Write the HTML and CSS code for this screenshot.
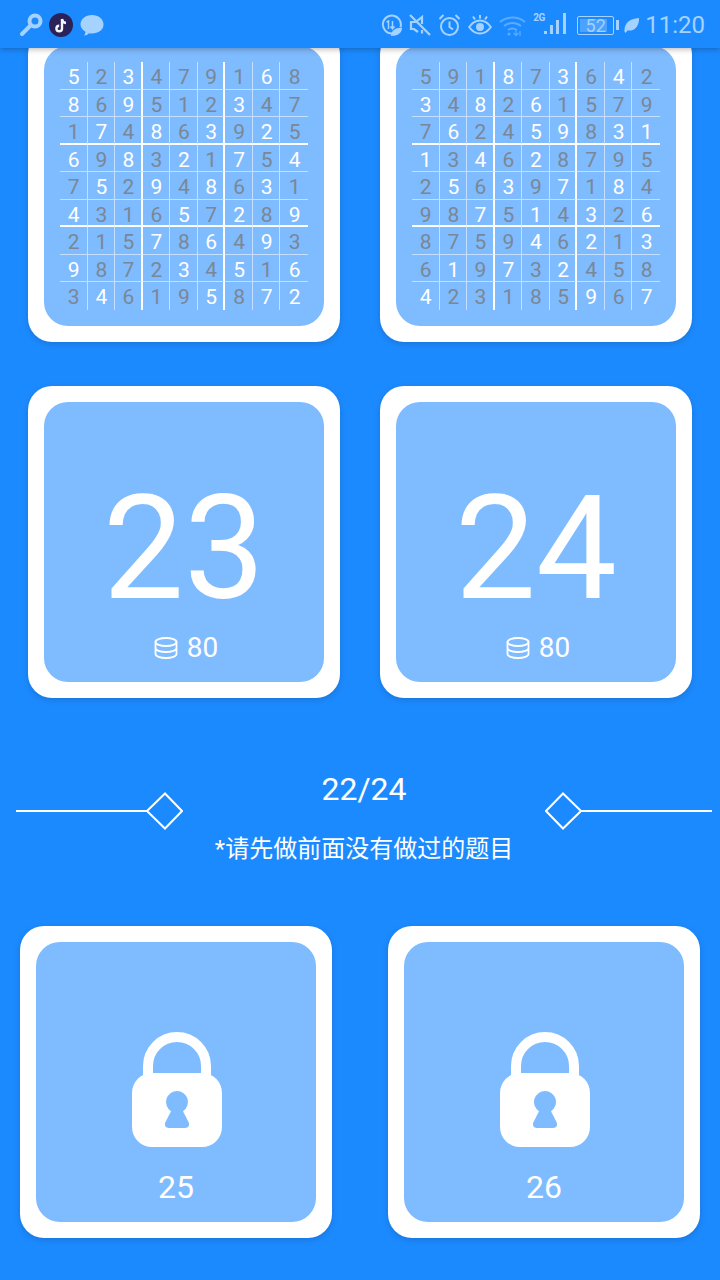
FILE: index.html
```html
<!DOCTYPE html>
<html lang="zh-CN">
<head>
  <meta charset="UTF-8" />
  <meta name="viewport" content="width=device-width, initial-scale=1.0" />
  <title>数独</title>
  <link rel="stylesheet" href="styles.css">
</head>
<body>
  <header class="status">
    <div class="status-left">
      <svg width="26" height="26" viewBox="0 0 26 26"><circle cx="17" cy="9" r="5.500" fill="none" stroke="currentColor" stroke-width="4"/><path d="M13 13 4 22" stroke="currentColor" stroke-width="4" stroke-linecap="round"/></svg>
      <svg width="24" height="24" viewBox="0 0 24 24"><circle cx="12" cy="12" r="12" fill="#2a2258"/><path d="M13 6v9.500a2.800 2.800 0 1 1-2.800-2.800M13 6c.3 2.400 1.800 3.800 4 4" fill="none" stroke="#f3f6fb" stroke-width="2.400"/></svg>
      <svg width="24" height="24" viewBox="0 0 24 24"><path d="M12 2c6.400 0 11.500 4 11.500 9.500S18.400 20.500 12 20.500c-1 0-2-.1-3-.3-1.200 1.300-3 2.300-5 2.300 1-1.200 1.500-2.500 1.500-3.800C2.400 17 .5 14.400.5 11.500.5 6 5.600 2 12 2Z" fill="currentColor"/></svg>
    </div>
    <div class="status-right">
      <svg width="22" height="24" viewBox="0 0 22 24"><path d="M12 20.500a9 9 0 1 1 8.500-6.500" fill="none" stroke="currentColor" stroke-width="2"/><path d="M6.500 9 8.500 8v8M12.500 8v7.500m-2-2 2 2.300 2-2.300" fill="none" stroke="currentColor" stroke-width="1.500"/><path d="M11 23c0-5 4-8.500 11-8.500 0 5.500-4 8.500-11 8.500Z" fill="currentColor"/></svg>
      <svg width="22" height="24" viewBox="0 0 22 24"><path d="M7 9H2v7h3l4 3M13 11V4L8 8" fill="none" stroke="currentColor" stroke-width="2.200"/><path d="M13 17v3.500M1 2l20 20" fill="none" stroke="currentColor" stroke-width="2.200"/></svg>
      <svg width="23" height="24" viewBox="0 0 23 24"><circle cx="11.500" cy="13.500" r="8.500" fill="none" stroke="currentColor" stroke-width="2"/><path d="M11.500 8.500v5.500l3.500 2.500M1.500 6l4-4M21.500 6l-4-4" fill="none" stroke="currentColor" stroke-width="2"/></svg>
      <svg width="24" height="24" viewBox="0 0 24 24"><path d="M1.200 14c3-4.500 6.300-6.500 10.800-6.500s7.800 2 10.800 6.500c-3 4.500-6.300 6.500-10.800 6.500S4.200 18.500 1.200 14Z" fill="none" stroke="currentColor" stroke-width="2"/><circle cx="12" cy="14" r="4" fill="currentColor"/><path d="M12 2v3.500M5 3.500 7 6.500M19 3.500l-2 3" stroke="currentColor" stroke-width="2"/></svg>
      <svg class="ic-wifi" width="27" height="24" viewBox="0 0 27 24"><path d="M1 9c7-6 18-6 25 0M5 13c5-4 12-4 17 0M9 17c3-2 6-2 9 0" fill="none" stroke="currentColor" stroke-width="2"/><circle cx="10" cy="21" r="1.600" fill="currentColor"/><path d="M17 17v5M14.500 20l2.500 2.500 2.500-2.500M21 18v5" fill="none" stroke="currentColor" stroke-width="1.300"/></svg>
      <div class="signal">
        <span class="net">2G</span>
        <svg width="35" height="24" viewBox="0 0 35 24"><path d="M11 21h3v-3h-3ZM17 21h3v-9h-3ZM23 21h3V7h-3ZM30 21h3V0h-3Z" fill="currentColor"/></svg>
      </div>
      <div class="battery"><div class="battery-box"><div class="battery-fill"></div><span>52</span></div><div class="battery-tip"></div></div>
      <svg width="15" height="18" viewBox="0 0 15 18"><path d="M.5 15.500C0 8 5 2.500 15 2c.3 8-4.500 13.500-11.500 12.500L1.500 17Z" fill="currentColor"/></svg>
      <span class="time">11:20</span>
    </div>
  </header>

  <main class="page">
    <section class="row">
      <div class="card">
        <div class="card-inner board-wrap">
          <div class="board">
            <span>5</span><b>2</b><span>3</span><b>4</b><b>7</b><b>9</b><b>1</b><span>6</span><b>8</b>
            <span>8</span><b>6</b><span>9</span><b>5</b><b>1</b><b>2</b><span>3</span><b>4</b><b>7</b>
            <b>1</b><span>7</span><b>4</b><span>8</span><b>6</b><span>3</span><b>9</b><span>2</span><b>5</b>
            <span>6</span><b>9</b><span>8</span><b>3</b><span>2</span><b>1</b><span>7</span><b>5</b><span>4</span>
            <b>7</b><span>5</span><b>2</b><span>9</span><b>4</b><span>8</span><b>6</b><span>3</span><b>1</b>
            <span>4</span><b>3</b><b>1</b><b>6</b><span>5</span><b>7</b><span>2</span><b>8</b><span>9</span>
            <b>2</b><b>1</b><b>5</b><span>7</span><b>8</b><span>6</span><b>4</b><span>9</span><b>3</b>
            <span>9</span><b>8</b><b>7</b><b>2</b><span>3</span><b>4</b><span>5</span><b>1</b><span>6</span>
            <b>3</b><span>4</span><b>6</b><b>1</b><b>9</b><span>5</span><b>8</b><span>7</span><span>2</span>
          </div>
        </div>
      </div>
      <div class="card">
        <div class="card-inner board-wrap">
          <div class="board">
            <b>5</b><b>9</b><b>1</b><span>8</span><b>7</b><span>3</span><b>6</b><span>4</span><b>2</b>
            <span>3</span><b>4</b><span>8</span><b>2</b><span>6</span><b>1</b><b>5</b><b>7</b><b>9</b>
            <b>7</b><span>6</span><b>2</b><b>4</b><span>5</span><span>9</span><b>8</b><span>3</span><span>1</span>
            <span>1</span><b>3</b><span>4</span><b>6</b><span>2</span><b>8</b><b>7</b><b>9</b><b>5</b>
            <b>2</b><span>5</span><b>6</b><span>3</span><b>9</b><span>7</span><b>1</b><span>8</span><b>4</b>
            <b>9</b><b>8</b><span>7</span><b>5</b><span>1</span><b>4</b><span>3</span><b>2</b><span>6</span>
            <b>8</b><b>7</b><b>5</b><b>9</b><span>4</span><b>6</b><span>2</span><b>1</b><span>3</span>
            <b>6</b><span>1</span><b>9</b><span>7</span><b>3</b><span>2</span><b>4</b><b>5</b><b>8</b>
            <span>4</span><b>2</b><b>3</b><b>1</b><b>8</b><b>5</b><span>9</span><b>6</b><span>7</span>
          </div>
        </div>
      </div>
    </section>

    <section class="row row-levels">
      <div class="card">
        <div class="card-inner level">
          <div class="level-num">23</div>
          <div class="cost">
            <svg width="24" height="22" viewBox="0 0 24 22"><g fill="none" stroke="currentColor" stroke-width="1.800"><ellipse cx="12" cy="5" rx="10.500" ry="4"/><path d="M1.500 5v12c0 2.200 4.700 4 10.500 4s10.500-1.800 10.500-4V5M1.500 11c0 2.200 4.700 4 10.500 4s10.500-1.800 10.500-4"/></g></svg>
            <span>80</span>
          </div>
        </div>
      </div>
      <div class="card">
        <div class="card-inner level">
          <div class="level-num">24</div>
          <div class="cost">
            <svg width="24" height="22" viewBox="0 0 24 22"><g fill="none" stroke="currentColor" stroke-width="1.800"><ellipse cx="12" cy="5" rx="10.500" ry="4"/><path d="M1.500 5v12c0 2.200 4.700 4 10.500 4s10.500-1.800 10.500-4V5M1.500 11c0 2.200 4.700 4 10.500 4s10.500-1.800 10.500-4"/></g></svg>
            <span>80</span>
          </div>
        </div>
      </div>
    </section>

    <section class="divider">
      <svg class="deco" width="167" height="38" viewBox="0 0 167 38"><path d="M0 19h131M149 1.500 166 19l-17 17.500L131 19Z" fill="none" stroke="#fff" stroke-width="2"/></svg>
      <div class="divider-text">
        <div class="progress">22/24</div>
        <div class="hint">*请先做前面没有做过的题目</div>
      </div>
      <svg class="deco" width="167" height="38" viewBox="0 0 167 38"><path d="M167 19H36M18 1.500 1 19l17 17.500L36 19Z" fill="none" stroke="#fff" stroke-width="2"/></svg>
    </section>

    <section class="row row-locked">
      <div class="card">
        <div class="card-inner locked">
          <svg class="lock" width="90" height="115" viewBox="0 0 90 115"><path d="M16 50V34a29 29 0 0 1 58 0v16" fill="none" stroke="#fff" stroke-width="10"/><path fill-rule="evenodd" d="M20 41h50a20 20 0 0 1 20 20v34a20 20 0 0 1-20 20H20A20 20 0 0 1 0 95V61a20 20 0 0 1 20-20Zm25 18a11 11 0 0 0-6 20.200L33.500 90c-1.500 3 0 6 3.500 6h16c3.500 0 5-3 3.500-6L51 79.200A11 11 0 0 0 45 59Z" fill="#fff"/></svg>
          <div class="locked-num">25</div>
        </div>
      </div>
      <div class="card">
        <div class="card-inner locked">
          <svg class="lock" width="90" height="115" viewBox="0 0 90 115"><path d="M16 50V34a29 29 0 0 1 58 0v16" fill="none" stroke="#fff" stroke-width="10"/><path fill-rule="evenodd" d="M20 41h50a20 20 0 0 1 20 20v34a20 20 0 0 1-20 20H20A20 20 0 0 1 0 95V61a20 20 0 0 1 20-20Zm25 18a11 11 0 0 0-6 20.200L33.500 90c-1.500 3 0 6 3.500 6h16c3.500 0 5-3 3.500-6L51 79.200A11 11 0 0 0 45 59Z" fill="#fff"/></svg>
          <div class="locked-num">26</div>
        </div>
      </div>
    </section>
  </main>
</body>
</html>
```

FILE: styles.css
```css
html, body {
  margin: 0;
  height: 1280px;
  overflow: hidden;
}
body {
  background: #1c8aff;
  color: #fff;
  font-family: Roboto, "Noto Sans CJK SC", sans-serif;
}

/* status bar */
.status {
  position: relative;
  z-index: 2;
  height: 48px;
  padding: 2px 15px 0 18px;
  box-sizing: border-box;
  display: flex;
  justify-content: space-between;
  align-items: center;
  background: #1c8aff;
  box-shadow: 0 1px 6px rgba(0, 0, 0, 0.3);
  color: #a5d2ff;
}
.status-left, .status-right {
  display: flex;
  align-items: center;
}
.status-left {
  gap: 5px;
}
.status-left svg:last-child {
  margin-left: 2px;
}
.status-right {
  gap: 7px;
}
.ic-wifi {
  opacity: 0.45;
}
.signal {
  position: relative;
  width: 35px;
  height: 24px;
  margin-right: 2px;
}
.net {
  position: absolute;
  left: 0;
  top: 0;
  font-size: 10px;
  font-weight: 700;
  letter-spacing: -0.5px;
  line-height: 10px;
}
.battery {
  display: flex;
  align-items: center;
  gap: 2px;
  margin-right: -2px;
}
.battery-box {
  position: relative;
  width: 35px;
  height: 17px;
  border: 1px solid currentColor;
  border-radius: 2px;
  text-align: center;
  font-size: 18px;
  line-height: 17px;
}
.battery-fill {
  position: absolute;
  left: 2px;
  top: 2px;
  bottom: 2px;
  width: 27px;
  background: rgba(165, 210, 255, 0.35);
}
.battery-box span {
  position: relative;
}
.battery-tip {
  width: 3px;
  height: 10px;
  background: currentColor;
}
.time {
  margin-left: -1px;
  font-size: 24px;
  line-height: 28px;
}

/* cards */
.page {
  margin-top: -18px;
}
.row {
  display: flex;
  gap: 40px;
  padding: 0 28px;
}
.row-levels {
  margin-top: 44px;
}
.row-locked {
  gap: 56px;
  padding: 0 20px;
}
.card {
  width: 312px;
  height: 312px;
  padding: 16px;
  box-sizing: border-box;
  background: #fff;
  border-radius: 24px;
  box-shadow: 0 2px 6px rgba(0, 0, 0, 0.15);
}
.card-inner {
  width: 280px;
  height: 280px;
  background: #7fbbff;
  border-radius: 24px;
}

/* sudoku preview */
.board-wrap {
  padding: 16px;
  box-sizing: border-box;
}
.board {
  display: grid;
  grid-template-columns: repeat(9, minmax(0, 1fr));
  grid-template-rows: repeat(9, minmax(0, 1fr));
  height: 248px;
  font-size: 21px;
  text-align: center;
}
.board span, .board b {
  padding: 3px 0 0 1px;
  font-weight: 400;
  line-height: 24px;
  border-right: 1px solid rgba(255, 255, 255, 0.55);
  border-bottom: 1px solid rgba(255, 255, 255, 0.55);
}
.board b {
  color: #7b8794;
}
.board > :nth-child(9n) {
  border-right: 0;
}
.board > :nth-child(n+73) {
  border-bottom: 0;
}
.board > :nth-child(9n+3), .board > :nth-child(9n+6) {
  border-right: 2px solid #fff;
}
.board > :nth-child(n+19):nth-child(-n+27),
.board > :nth-child(n+46):nth-child(-n+54) {
  border-bottom: 2px solid #fff;
}

/* open levels */
.level {
  display: flex;
  flex-direction: column;
  align-items: center;
}
.level-num {
  margin-top: 92px;
  font-size: 144px;
  line-height: 110px;
}
.cost {
  display: flex;
  align-items: center;
  gap: 9px;
  margin: 27px 0 0 4px;
  font-size: 28px;
  line-height: 34px;
}

/* divider */
.divider {
  display: flex;
  justify-content: space-between;
  margin: 72px 8px 59px 16px;
  height: 97px;
}
.deco {
  margin-top: 22px;
}
.divider-text {
  text-align: center;
}
.progress {
  font-size: 32px;
  line-height: 38px;
}
.hint {
  margin-top: 23px;
  font-size: 24px;
  line-height: 36px;
}

/* locked levels */
.locked {
  display: flex;
  flex-direction: column;
  align-items: center;
  padding-top: 90px;
  box-sizing: border-box;
}
.lock {
  margin-left: 2px;
}
.locked-num {
  margin-top: 21px;
  font-size: 32px;
  line-height: 38px;
}
```
